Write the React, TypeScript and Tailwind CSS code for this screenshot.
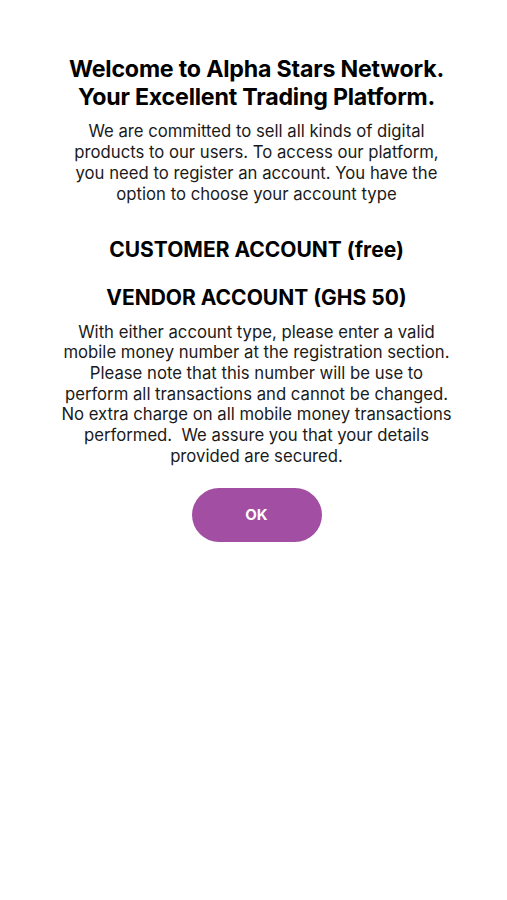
const App = () => {
  return (
    <div className="min-h-[900px] w-full bg-white pl-[6px] text-black font-['Inter','Liberation_Sans',sans-serif] flex flex-col items-center text-center">
      <h1 className="mt-[55px] text-[23.2px] leading-[28px] font-bold tracking-[-0.2px] whitespace-nowrap">
        Welcome to Alpha Stars Network.
        <br />
        Your Excellent Trading Platform.
      </h1>
      <p className="mt-[9.5px] text-[16.7px] leading-[21px] text-[#1a1a1a] whitespace-nowrap">
        We are committed to sell all kinds of digital
        <br />
        products to our users. To access our platform,
        <br />
        you need to register an account. You have the
        <br />
        option to choose your account type
      </p>
      <h2 className="mt-[33.5px] text-[21px] leading-[24px] font-bold whitespace-nowrap">CUSTOMER ACCOUNT (free)</h2>
      <h2 className="mt-[24px] text-[21px] leading-[24px] font-bold whitespace-nowrap">VENDOR ACCOUNT (GHS 50)</h2>
      <p className="mt-[11.5px] text-[16.7px] leading-[20.7px] text-[#1a1a1a] whitespace-nowrap">
        With either account type, please enter a valid
        <br />
        mobile money number at the registration section.
        <br />
        Please note that this number will be use to
        <br />
        perform all transactions and cannot be changed.
        <br />
        No extra charge on all mobile money transactions
        <br />
        performed.&nbsp; We assure you that your details
        <br />
        provided are secured.
      </p>
      <button className="mt-[21.5px] w-[130px] h-[54px] rounded-full bg-[#a24ea2] text-white text-[15px] font-bold">
        OK
      </button>
    </div>
  )
}

export default App
